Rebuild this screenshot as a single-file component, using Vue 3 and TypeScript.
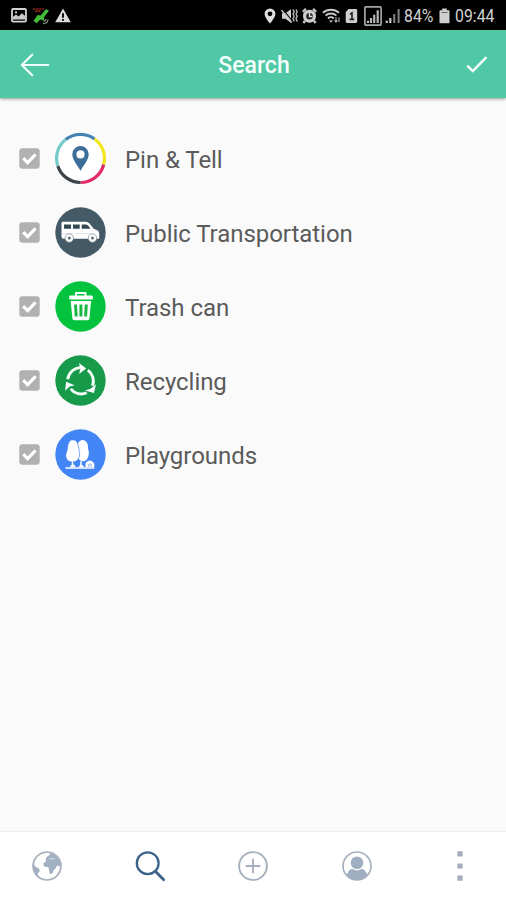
<script setup lang="ts">
import { ref } from 'vue'

type Kind = 'pin' | 'transport' | 'trash' | 'recycling' | 'playground'

interface Category {
  kind: Kind
  label: string
  checked: boolean
}

const categories = ref<Category[]>([
  { kind: 'pin', label: 'Pin & Tell', checked: true },
  { kind: 'transport', label: 'Public Transportation', checked: true },
  { kind: 'trash', label: 'Trash can', checked: true },
  { kind: 'recycling', label: 'Recycling', checked: true },
  { kind: 'playground', label: 'Playgrounds', checked: true },
])

function toggle(item: Category) {
  item.checked = !item.checked
}
</script>

<template>
  <div class="screen">
    <div class="status">
      <div class="status-group">
        <!-- gallery -->
        <svg width="16" height="15" viewBox="0 0 16 15">
          <rect x="1" y="1" width="14" height="12.6" rx="1.2" fill="none" stroke="#d4d4d4" stroke-width="1.8" />
          <path d="M2 11.5V8.8l3-2.3 2.6 2 3.2-3.2 3.2 2.4v3.8z" fill="#c9c9c9" />
          <circle cx="5" cy="4.4" r="1.1" fill="#d4d4d4" />
        </svg>
        <!-- satellite -->
        <svg class="gap-sat" width="18" height="18" viewBox="0 0 18 18">
          <path d="M1 2h11M3 4.2h6" stroke="#8d2019" stroke-width="1.7" stroke-dasharray="2.4 .7" />
          <path d="M1.5 14 5.600 8l3 .4L14 2l3 1.700-4.700 6-.5 3.700-3.600-.8-3.400 3.700z" fill="#43bd39" />
          <path d="M11 16.5c2.6.2 4.6-1.3 5-4M11.5 14c1.3 0 2.3-.6 2.5-2" fill="none" stroke="#7c9078" stroke-width="1.3" />
        </svg>
        <!-- warning -->
        <svg class="gap-warn" width="16" height="15" viewBox="0 0 16 15">
          <path d="M8 .5 15.8 14.3H.2z" fill="#d9d9d9" />
          <path d="M8 5.3v4.4M8 11v1.8" stroke="#111" stroke-width="2" />
        </svg>
      </div>
      <div class="status-group">
        <svg width="12" height="16" viewBox="0 0 12 16">
          <path d="M6 .5a5.400 5.400 0 0 0-5.400 5.400C.6 9.400 6 15.500 6 15.500s5.400-6.100 5.400-9.600A5.400 5.400 0 0 0 6 .5zm0 2.900a2.400 2.400 0 1 1 0 4.800 2.400 2.400 0 0 1 0-4.800z" fill="#dedede" />
        </svg>
        <svg class="gap-mute" width="17" height="16" viewBox="0 0 17 16">
          <path d="M1 5.3h3.3L10 1.200v13.600l-5.700-4H1z" fill="#cfcfcf" />
          <path d="m1.700 1 10 12.500" stroke="#050505" stroke-width="1.200" />
          <path d="m.5 2.200 10.200 12.300" stroke="#c6c6c6" stroke-width="1.500" />
          <path d="m12 1.500 1.200 2.200L12 6l1.200 2.200L12 10.500l1.200 3M15 1.500l1.200 2.200L15 6l1.200 2.200-1.200 2.300 1.200 3" fill="none" stroke="#bdbdbd" stroke-width="1.400" />
        </svg>
        <svg class="gap-alarm" width="15" height="16" viewBox="0 0 15 16">
          <path d="m.8 3.800 3.100-3M14.200 3.800l-3.100-3M3 12.800 1.400 15M12 12.800l1.600 2.200" stroke="#c4c4c4" stroke-width="2.400" />
          <circle cx="7.500" cy="8.200" r="4.900" fill="#222" stroke="#cfcfcf" stroke-width="3.200" />
          <path d="M7.500 5v3.500h2.800" fill="none" stroke="#ddd" stroke-width="1.400" />
        </svg>
        <svg class="gap-wifi" width="19" height="16" viewBox="0 0 19 16">
          <path d="M.9 4.700c4.300-4.100 11.800-4.100 16.100 0M3.500 7.600c2.900-2.800 8-2.800 10.900 0M6 10.400c1.600-1.500 4.200-1.500 5.800 0" fill="none" stroke="#c6c6c6" stroke-width="2" />
          <path d="m9 14.800-2-2.400h4z" fill="#ccc" />
          <path d="M14 9v5m-1.500-1.600L14 14l1.500-1.600M17 14V9.500" fill="none" stroke="#aaa" stroke-width="1.200" />
        </svg>
        <svg class="gap-sim" width="13" height="16" viewBox="0 0 13 16">
          <path d="M3.600 1h7.200q1.400 0 1.400 1.400v11.200q0 1.400-1.400 1.400H2q-1.300 0-1.300-1.400V4z" fill="#d0d0d0" />
          <path d="M5 6.200 7 5v6.400M4.600 11.400h4.600" fill="none" stroke="#222" stroke-width="1.600" />
        </svg>
        <svg class="gap-box" width="18" height="20" viewBox="0 0 18 20">
          <rect x=".9" y=".9" width="16.200" height="18.200" rx="1" fill="none" stroke="#a6a6a6" stroke-width="1.700" />
          <path d="M4 17v-2.200M7 17v-5M10.200 17V8.700M13.700 17V4.200" stroke="#b5b5b5" stroke-width="2.200" />
        </svg>
        <svg class="gap-signal" width="15" height="16" viewBox="0 0 15 16">
          <path d="M1.800 15v-2.300M5.300 15v-5" stroke="#c4c4c4" stroke-width="2.200" />
          <path d="M9.300 15V6M13.600 15V1" stroke="#858585" stroke-width="2" />
        </svg>
        <span class="battery-text">84%</span>
        <svg class="gap-battery" width="11" height="16" viewBox="0 0 11 16">
          <path d="M3.200.6h4.600v1.600h1.800q.9 0 .9.900v11.300q0 .9-.9.900H1.400q-.9 0-.9-.9V3.100q0-.9.900-.9h1.800z" fill="#cfcfcf" />
          <path d="M2.600 4.500h5.800" stroke="#666" stroke-width="1" />
        </svg>
        <span class="clock">09:44</span>
      </div>
    </div>

    <header class="bar">
      <button class="bar-button" aria-label="Back">
        <svg width="30" height="24" viewBox="0 0 30 24">
          <path d="M28.200 12H1.800M12.200 1.700 1.800 12l10.400 10.300" fill="none" stroke="#f2fffa" stroke-width="2.200" stroke-linecap="round" stroke-linejoin="round" />
        </svg>
      </button>
      <h1 class="title">Search</h1>
      <button class="bar-button" aria-label="Apply">
        <svg width="24" height="20" viewBox="0 0 24 20">
          <path d="m2.200 10.700 5.600 5.400L21.500 2.200" fill="none" stroke="#f7fffc" stroke-width="2.400" />
        </svg>
      </button>
    </header>

    <main class="list">
      <div v-for="item in categories" :key="item.kind" class="row" @click="toggle(item)">
        <svg class="check" width="21" height="21" viewBox="0 0 21 21">
          <rect x=".3" y=".3" width="20.400" height="20.400" rx="3" fill="#b1b1b1" />
          <path v-if="item.checked" d="m4.200 10.200 4.400 4.400 8-8.300" fill="none" stroke="#fff" stroke-width="3.200" />
        </svg>

        <svg class="badge" width="52" height="52" viewBox="0.5 0.5 52 52">
          <g v-if="item.kind === 'pin'">
            <circle cx="26" cy="26" r="24" fill="#fff" />
            <g fill="none" stroke-width="3.200">
              <path d="M11.200 7.100A24 24 0 0 1 40 6.500" stroke="#4383b3" />
              <path d="M40 6.500A24 24 0 0 1 49.200 32" stroke="#f1e51c" />
              <path d="M49.200 32A24 24 0 0 1 26 50" stroke="#e02c67" />
              <path d="M26 50A24 24 0 0 1 3.300 33.500" stroke="#3f4448" />
              <path d="M3.300 33.500A24 24 0 0 1 11.200 7.100" stroke="#75cbcb" />
            </g>
            <path d="M26 13.600a8.200 8.200 0 0 0-8.200 8.200c0 5.900 6.200 12.300 8.200 16.800 2-4.500 8.200-10.900 8.200-16.800A8.200 8.200 0 0 0 26 13.600zm0 4.200a4.100 4.100 0 1 1 0 8.200 4.100 4.100 0 0 1 0-8.200z" fill="#3d6d99" />
          </g>

          <g v-else-if="item.kind === 'transport'">
            <circle cx="26" cy="26" r="25.200" fill="#455a67" />
            <path d="M8.400 15.300H31q2.600.1 4.200 1.900l4 5.100 3.900 1.700q1.500.8 1.600 2.700v5.500H9q-2 0-2-2V16.700q0-1.400 1.400-1.400z" fill="#fff" />
            <path d="M9.500 18h7v4.200h-7zM18.500 18h6.700v4.200h-6.700zM27.200 18h4.300q1.500.2 2.300 1.300l2.200 2.900h-8.800z" fill="#344854" />
            <path d="M8 27h10.500m2.500 0h16" stroke="#d5dce1" stroke-width=".8" />
            <g fill="#fff" stroke="#8b98a0" stroke-width=".8">
              <circle cx="14.800" cy="31.500" r="4.200" />
              <circle cx="38" cy="31.500" r="4.200" />
            </g>
            <circle cx="14.800" cy="31.500" r="1.600" fill="#607480" />
            <circle cx="38" cy="31.500" r="1.600" fill="#607480" />
          </g>

          <g v-else-if="item.kind === 'trash'">
            <circle cx="26" cy="26" r="25.200" fill="#03c23d" />
            <path d="M21.500 15.500v-3.100h9.500v3.100" fill="none" stroke="#fff" stroke-width="2" stroke-linejoin="round" />
            <rect x="14.700" y="15.100" width="23.600" height="4" rx="1.200" fill="#fff" />
            <path d="M16.200 20.500h20.400l-1.700 17.600q-.2 1.700-1.900 1.700H19.800q-1.700 0-1.900-1.700z" fill="#fff" />
            <path d="m21 24 .7 12M26.400 24v12M31.800 24l-.7 12" stroke="#17b943" stroke-width="3" />
          </g>

          <g v-else-if="item.kind === 'recycling'">
            <circle cx="26" cy="26" r="25.200" fill="#179b4b" />
            <g fill="none" stroke="#f5fff8" stroke-width="2.900">
              <path d="M13.200 24.700a13.300 13.300 0 0 1 13-11.600" />
              <path d="M33.300 15.600a13.300 13.300 0 0 1 4.700 15.600" />
              <path d="M32.200 38.300a13.300 13.300 0 0 1-16-4" />
            </g>
            <g fill="#fff">
              <path d="m24.400 8.400 7.300 5.500-7.100 5.700 1.300-5.700z" />
              <path d="m41.500 29.800-2 8.800-8.900-2.500 5.500-1.900z" />
              <path d="m10.600 36.200 1-9 8.500 3.600-5 1.300z" />
            </g>
          </g>

          <g v-else>
            <circle cx="26" cy="26" r="25.200" fill="#4285f4" />
            <path d="M28 11.500c4.200 0 6 4.600 5.500 8.400 2 4.800.5 12.600-5.300 12.800-4 0-6-4.800-6-10.900 0-5 1.800-10.300 5.800-10.300z" fill="#fff" />
            <path d="M18.300 11.300c4.300 0 5.500 4.600 6 8.600.5 2.700 1.100 4.200.8 6.600-.4 4-3 6.900-7.200 6.900-4 0-6.700-2.700-6.600-6.500.1-2.700 1.300-4.200 1.600-6.600.5-4.800 1.600-9 5.400-9z" fill="#fff" stroke="#4285f4" stroke-width=".7" />
            <path d="M18 33.200v5.500M26.500 32.800v5.900" stroke="#fff" stroke-width="1.500" />
            <path d="M15.500 38.600q1-3.300 3-2.200 2-1.200 2.500 2.200zM24.200 38.600q1.300-3 3-1.600 2-.7 2.300 1.600z" fill="#fff" />
            <path d="M31 38.400v-3.400q1.300-2.700 3.900-3 3.500.1 4.900 3.400v3z" fill="#fff" />
            <path d="M34.300 38.400v-2.700h2.400v2.700" fill="none" stroke="#8db6f9" stroke-width="1" />
            <path d="M11 39.500h28.800" stroke="#edf4ff" stroke-width="1.700" />
          </g>
        </svg>

        <span class="label">{{ item.label }}</span>
      </div>
    </main>

    <nav class="tabs">
      <button class="tab" aria-label="World">
        <svg width="32" height="32" viewBox="0 0 32 32">
          <circle cx="16" cy="16" r="13.900" fill="#fff" stroke="#acb4c0" stroke-width="1.900" />
          <path d="M15 7.500 18.500 5l.8-2.200 5.400 2.600 4.700 6.600-.4 4.600-3-1-1.400 3-2.200 2-.8 2.800-2.900.6-.6-4.300-1-2.700-3.700-.2-1.200-3 2.600-2.500z" fill="#a2b0c3" />
          <path d="m18.500 9 5.200-.5" stroke="#dde4ec" stroke-width="1.200" />
          <path d="m2.400 14 2.800 3.300 2.900 1.300.6 2.600-2 2.200.8 2.700A14 14 0 0 1 2.400 14z" fill="#a2b0c3" />
        </svg>
      </button>
      <button class="tab" aria-label="Search">
        <svg width="32" height="32" viewBox="0 0 32 32">
          <circle cx="13.700" cy="13.200" r="10.900" fill="none" stroke="#3c648b" stroke-width="2.300" />
          <path d="m21.300 21.300 8.200 8.300" stroke="#3c648b" stroke-width="2.900" stroke-linecap="round" />
        </svg>
      </button>
      <button class="tab" aria-label="Add">
        <svg width="32" height="32" viewBox="0 0 32 32">
          <circle cx="16" cy="16" r="13.900" fill="none" stroke="#a6afbd" stroke-width="1.900" />
          <path d="M16 8.700v14.600M8.700 16h14.600" stroke="#a6afbd" stroke-width="1.900" />
        </svg>
      </button>
      <button class="tab" aria-label="Profile">
        <svg width="32" height="32" viewBox="0 0 32 32">
          <circle cx="16" cy="16" r="14" fill="#fff" stroke="#a7b0be" stroke-width="1.700" />
          <circle cx="16" cy="12.700" r="6.300" fill="#a0aec1" />
          <path d="M5.900 24.700c1.100-3.700 3-5.600 5.700-5.600 2.700 1.800 6.100 1.800 8.800 0 2.700 0 4.600 1.900 5.700 5.600A14 14 0 0 1 16 30 14 14 0 0 1 5.900 24.700z" fill="#a0aec1" />
        </svg>
      </button>
      <button class="tab" aria-label="More">
        <svg width="32" height="32" viewBox="0 0 32 32">
          <path d="M13.400 1.300h5.200v5.200h-5.200zM13.400 13.400h5.200v5.200h-5.200zM13.400 25.500h5.200v5.200h-5.200z" fill="#a4adbc" />
        </svg>
      </button>
    </nav>
  </div>
</template>

<style>
body {
  margin: 0;
}
</style>

<style scoped>
.screen {
  display: flex;
  flex-direction: column;
  width: 100%;
  height: 100vh;
  overflow: hidden;
  background: #fafafa;
  font-family: Roboto, "Liberation Sans", sans-serif;
}

svg {
  display: block;
  flex: none;
}

button {
  padding: 0;
  border: 0;
  background: none;
}

.status {
  display: flex;
  flex: none;
  align-items: center;
  justify-content: space-between;
  box-sizing: border-box;
  height: 30px;
  padding: 1px 12px 0 11px;
  background: #000;
  color: #d2d2d2;
}

.status-group {
  display: flex;
  align-items: center;
}

.gap-sat { margin-left: 5px; }
.gap-warn { margin-left: 5px; }
.gap-mute { margin-left: 5px; }
.gap-alarm { margin-left: 4px; }
.gap-wifi { margin-left: 5px; }
.gap-sim { margin-left: 4px; }
.gap-box { margin-left: 6px; }
.gap-signal { margin-left: 3px; }
.gap-battery { margin-left: 5px; }

.battery-text,
.clock {
  font-size: 18px;
  line-height: 28px;
  white-space: nowrap;
  transform: scaleX(0.88);
  transform-origin: left center;
}

.battery-text {
  width: 30px;
  margin-left: 4px;
}

.clock {
  width: 39px;
  margin-left: 5px;
}

.bar {
  position: relative;
  display: flex;
  flex: none;
  align-items: center;
  box-sizing: border-box;
  height: 68px;
  padding: 2px 17px 0 20px;
  background: #50c8a5;
  box-shadow: 0 1px 3px rgba(0, 0, 0, 0.4);
}

.title {
  flex: 1;
  margin: 0;
  padding: 2px 7px 0 0;
  color: #f5fffb;
  font-size: 23px;
  font-weight: 500;
  line-height: 30px;
  text-align: center;
}

.list {
  display: grid;
  flex: 1;
  align-content: start;
  grid-auto-rows: 74.1px;
  padding: 23.5px 19px 0;
}

.row {
  display: flex;
  align-items: center;
}

.badge {
  margin-left: 14.5px;
}

.label {
  margin-left: 18.5px;
  padding-top: 2px;
  color: #5b5b5b;
  font-size: 24px;
  letter-spacing: -0.05px;
  line-height: 30px;
  white-space: nowrap;
}

.tabs {
  display: flex;
  flex: none;
  align-items: center;
  justify-content: space-between;
  box-sizing: border-box;
  height: 69px;
  padding: 0 30px 0 30.8px;
  border-top: 1px solid #eee;
  background: #fff;
}
</style>
